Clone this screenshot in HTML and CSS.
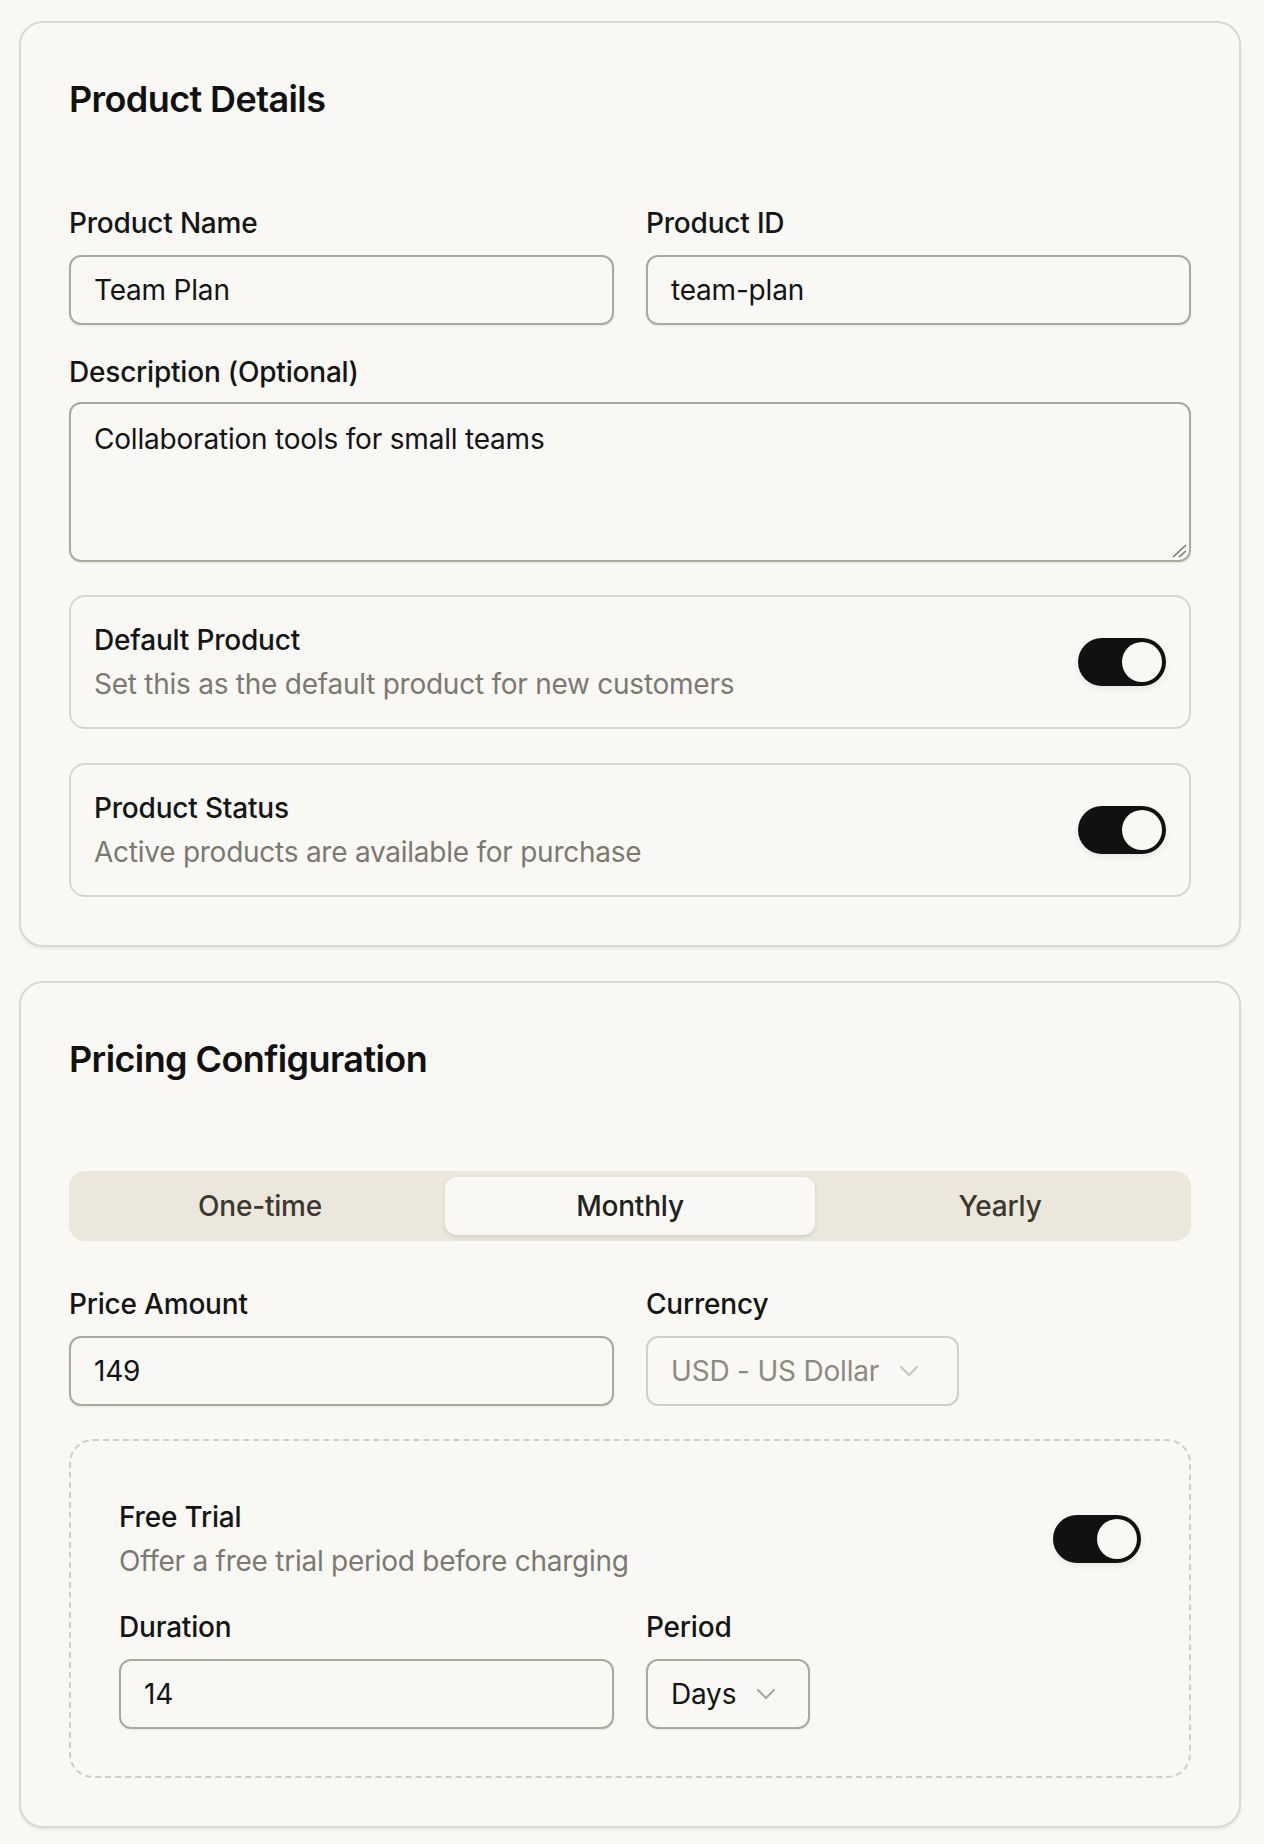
FILE: index.html
```html
<!DOCTYPE html>
<html lang="en">
<head>
<meta charset="utf-8">
<title>Product Settings</title>
<link rel="stylesheet" href="styles.css">
</head>
<body>
<main class="page">
  <section class="card">
    <h2 class="card-title">Product Details</h2>
    <div class="grid-2 row">
      <div class="field">
        <div class="label">Product Name</div>
        <div class="input">Team Plan</div>
      </div>
      <div class="field">
        <div class="label">Product ID</div>
        <div class="input">team-plan</div>
      </div>
    </div>
    <div class="field row-desc">
      <div class="label label-tight">Description (Optional)</div>
      <div class="textarea">Collaboration tools for small teams
        <svg class="resize" width="16" height="14" viewBox="0 0 16 14"><path d="M15 1 L2 13 M15 7 L8 13" stroke="#6b6a64" stroke-width="1.2" fill="none"/></svg>
      </div>
    </div>
    <div class="toggle-box">
      <div class="toggle-text">
        <div class="toggle-title">Default Product</div>
        <div class="toggle-sub">Set this as the default product for new customers</div>
      </div>
      <span class="switch"><span class="thumb"></span></span>
    </div>
    <div class="toggle-box last">
      <div class="toggle-text">
        <div class="toggle-title">Product Status</div>
        <div class="toggle-sub">Active products are available for purchase</div>
      </div>
      <span class="switch"><span class="thumb"></span></span>
    </div>
  </section>

  <section class="card">
    <h2 class="card-title title-pricing">Pricing Configuration</h2>
    <div class="tabs">
      <div class="tab">One-time</div>
      <div class="tab active">Monthly</div>
      <div class="tab">Yearly</div>
    </div>
    <div class="grid-2 row-price">
      <div class="field">
        <div class="label">Price Amount</div>
        <div class="input">149</div>
      </div>
      <div class="field">
        <div class="label">Currency</div>
        <div class="select disabled">
          <span>USD - US Dollar</span>
          <svg class="chev" width="32" height="32" viewBox="0 0 24 24"><path d="m6 9 6 6 6-6" fill="none" stroke="currentColor" stroke-width="1.6" stroke-linecap="round" stroke-linejoin="round"/></svg>
        </div>
      </div>
    </div>
    <div class="trial">
      <div class="trial-head">
        <div class="toggle-text">
          <div class="toggle-title">Free Trial</div>
          <div class="toggle-sub">Offer a free trial period before charging</div>
        </div>
        <span class="switch"><span class="thumb"></span></span>
      </div>
      <div class="grid-2 trial-grid">
        <div class="field">
          <div class="label">Duration</div>
          <div class="input">14</div>
        </div>
        <div class="field">
          <div class="label">Period</div>
          <div class="select days">
            <span>Days</span>
            <svg class="chev" width="32" height="32" viewBox="0 0 24 24"><path d="m6 9 6 6 6-6" fill="none" stroke="currentColor" stroke-width="1.6" stroke-linecap="round" stroke-linejoin="round"/></svg>
          </div>
        </div>
      </div>
    </div>
  </section>
</main>
</body>
</html>
```

FILE: styles.css
```css
* { box-sizing: border-box; }
html, body { margin: 0; padding: 0; }
body {
  background: #f9f8f4;
  font-family: Inter, "Noto Sans", "Liberation Sans", sans-serif;
  color: #141414;
}
.page {
  padding: 21px 23px 18px 19px;
}
.card {
  background: #f9f8f4;
  border: 2px solid #dad8d2;
  border-radius: 24px;
  padding: 48px;
  box-shadow: 0 2px 3px rgba(0,0,0,0.07);
  margin-bottom: 34px;
}
.card:last-child { margin-bottom: 0; }
.card-title {
  margin: 0 0 76px 0;
  font-size: 36px;
  line-height: 56px;
  font-weight: 600;
  letter-spacing: -0.6px;
  color: #111;
}
.title-pricing { margin-bottom: 84px; }
.grid-2 {
  display: grid;
  grid-template-columns: 1fr 1fr;
  column-gap: 32px;
  align-items: start;
}
.row { margin-bottom: 27px; }
.field { display: flex; flex-direction: column; align-items: flex-start; }
.label {
  font-size: 28px;
  line-height: 40px;
  font-weight: 500;
  letter-spacing: -0.2px;
  color: #151515;
  margin-bottom: 12px;
}
.label-tight { margin-bottom: 10px; }
.input {
  align-self: stretch;
  height: 70px;
  border: 2px solid #aba99e;
  border-radius: 12px;
  padding: 0 23px;
  font-size: 28px;
  line-height: 66px;
  letter-spacing: -0.2px;
  color: #141414;
  box-shadow: 0 1px 2px rgba(0,0,0,0.08);
}
.row-desc { margin-bottom: 33px; }
.textarea {
  position: relative;
  align-self: stretch;
  height: 160px;
  border: 2px solid #aba99e;
  border-radius: 12px;
  padding: 15px 23px;
  font-size: 28px;
  line-height: 40px;
  letter-spacing: -0.2px;
  color: #141414;
  box-shadow: 0 1px 2px rgba(0,0,0,0.08);
}
.resize { position: absolute; right: 2px; bottom: 2px; }
.toggle-box {
  display: flex;
  align-items: center;
  justify-content: space-between;
  border: 2px solid #d8d6d0;
  border-radius: 16px;
  padding: 23px 23px 23px 23px;
  margin-bottom: 34px;
}
.toggle-box.last { margin-bottom: 0; }
.toggle-title {
  font-size: 28px;
  line-height: 40px;
  font-weight: 500;
  letter-spacing: -0.2px;
  color: #151515;
}
.toggle-sub {
  margin-top: 4px;
  font-size: 28px;
  line-height: 40px;
  letter-spacing: -0.25px;
  color: #7c7971;
}
.switch {
  position: relative;
  display: block;
  width: 88px;
  height: 48px;
  border-radius: 24px;
  background: #111;
  flex-shrink: 0;
  box-shadow: 0 3px 6px rgba(0,0,0,0.07);
}
.thumb {
  position: absolute;
  top: 4px;
  right: 4px;
  width: 40px;
  height: 40px;
  border-radius: 50%;
  background: #f9f8f4;
}
.tabs {
  display: grid;
  grid-template-columns: 1fr 1fr 1fr;
  padding: 6px;
  background: #ebe7dc;
  border-radius: 16px;
  height: 70px;
}
.tab {
  height: 58px;
  border-radius: 12px;
  font-size: 28px;
  line-height: 58px;
  text-align: center;
  font-weight: 500;
  letter-spacing: -0.2px;
  color: #3a392f;
}
.tab.active {
  background: #f9f8f4;
  color: #23231d;
  box-shadow: 0 2px 4px rgba(0,0,0,0.10);
}
.row-price { margin-top: 43px; }
.select {
  display: flex;
  align-items: center;
  height: 70px;
  border: 2px solid #aba99e;
  border-radius: 12px;
  padding: 0 26px 0 23px;
  font-size: 28px;
  letter-spacing: -0.2px;
  color: #141414;
  box-shadow: 0 1px 2px rgba(0,0,0,0.08);
}
.select .chev { margin-left: 14px; color: #a9a79e; }
.select.disabled {
  border-color: #d2cfc8;
  color: #8d8a83;
  box-shadow: none;
  padding-right: 32px;
}
.select.disabled .chev { color: #c9c6be; }
.trial {
  margin-top: 33px;
  border: 2px dashed #d0cec7;
  border-radius: 24px;
  padding: 56px 48px 47px 48px;
}
.trial-head {
  display: flex;
  align-items: center;
  justify-content: space-between;
}
.trial-grid { margin-top: 26px; }
```
